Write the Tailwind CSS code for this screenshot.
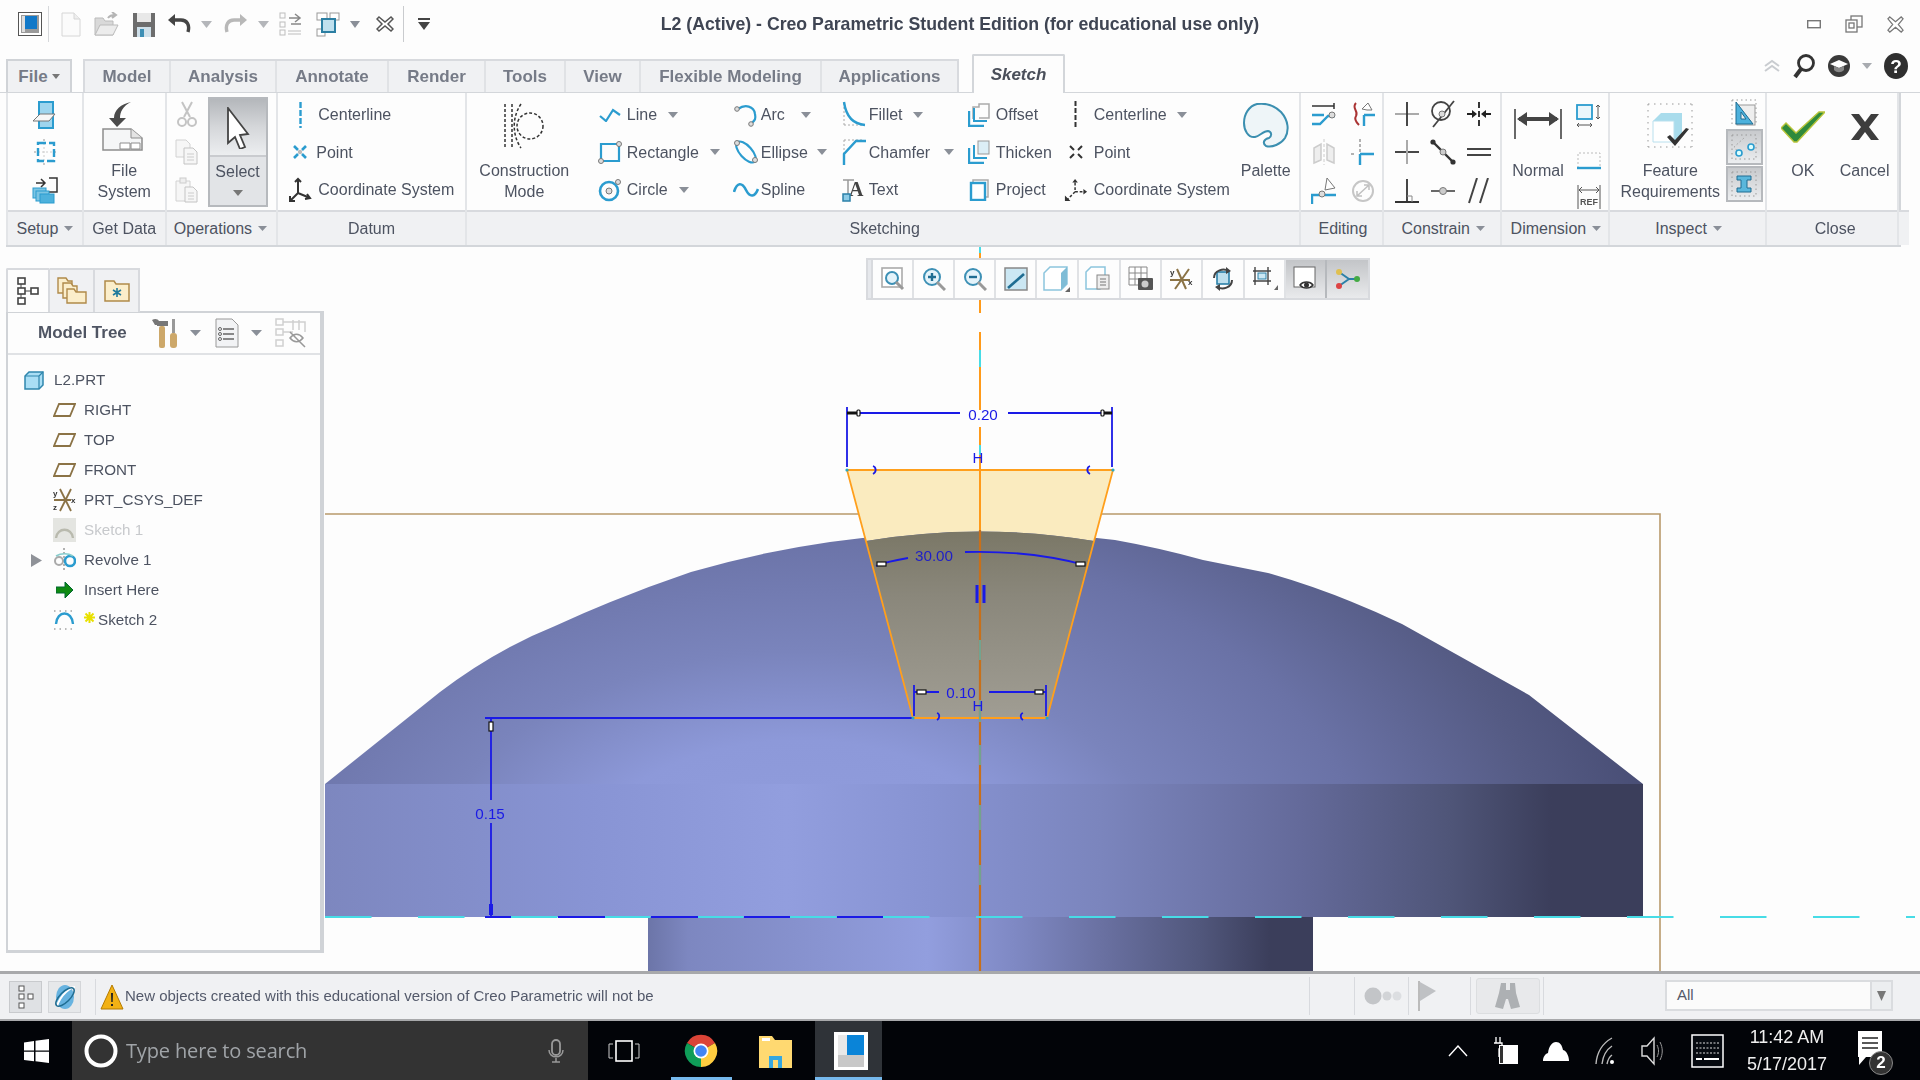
<!DOCTYPE html>
<html><head><meta charset="utf-8"><title>Creo</title>
<script src="https://cdn.jsdelivr.net/npm/@tailwindcss/browser@4"></script></head>
<body class="m-0 overflow-hidden bg-[#fdfdfd]">
<div class="w-[1920px] h-[1080px] flex flex-col font-['Liberation_Sans',Arial,sans-serif] text-[#4d5361] blur-[0.55px] overflow-hidden">

<!-- title bar -->
<header class="h-[48px] shrink-0 grid grid-cols-[1fr_auto_1fr] items-center">
  <div class="flex items-center pl-[18px] h-full">
    <svg class="w-[24px] h-[24px]" viewBox="0 0 24 24"><rect x=".5" y=".5" width="23" height="23" fill="#fff" stroke="#555"/><rect x="3" y="3" width="18" height="18" fill="#9a9a9a"/><rect x="7" y="4" width="12" height="13" fill="#1178c8"/><rect x="4" y="4" width="3" height="16" fill="#ddd"/></svg>
    <div class="w-px h-[36px] bg-[#d6d8db] ml-[6px]"></div>
    <svg class="w-[20px] h-[25px] ml-[12px]" viewBox="0 0 20 25"><path d="M1 1h12l6 6v17H1z" fill="#fbfbfb" stroke="#d6d6d6"/><path d="M13 1v6h6" fill="#eee" stroke="#d6d6d6"/></svg>
    <svg class="w-[25px] h-[25px] ml-[13px]" viewBox="0 0 25 25"><path d="M1 23V6h8l2 3h8v14z" fill="#d9d9d9" stroke="#bbb"/><path d="M1 23l5-10h18l-5 10z" fill="#ececec" stroke="#bbb"/><path d="M14 6c2-3 4-3 7-3M18 0l4 3-4 3" fill="none" stroke="#b5b5b5" stroke-width="2"/></svg>
    <svg class="w-[24px] h-[25px] ml-[13px]" viewBox="0 0 24 25"><path d="M1 1h22v24H1z" fill="#6d6d6d"/><rect x="5" y="1" width="14" height="9" fill="#e8e8e8"/><rect x="5" y="15" width="14" height="10" fill="#cfe0ea"/><rect x="8" y="17" width="4" height="8" fill="#3d8fb5"/></svg>
    <svg class="w-[24px] h-[20px] ml-[11px]" viewBox="0 0 24 20"><path d="M21 18c2-7-1-12-7-12H5" fill="none" stroke="#444" stroke-width="3.4"/><path d="M8 0L1 6l7 6z" fill="#444"/></svg>
    <svg class="w-[11px] h-[7px] ml-[10px]" viewBox="0 0 11 7"><path d="M0 0h11L5.500 7z" fill="#b4b6ba"/></svg>
    <svg class="w-[24px] h-[20px] ml-[12px]" viewBox="0 0 24 20"><path d="M3 18C1 11 4 6 10 6h9" fill="none" stroke="#b8b8b8" stroke-width="3.400"/><path d="M16 0l7 6-7 6z" fill="#b8b8b8"/></svg>
    <svg class="w-[11px] h-[7px] ml-[10px]" viewBox="0 0 11 7"><path d="M0 0h11L5.500 7z" fill="#b4b6ba"/></svg>
    <svg class="w-[24px] h-[24px] ml-[10px]" viewBox="0 0 24 24"><g fill="none" stroke="#bdbdbd"><rect x="1" y="1" width="5" height="5"/><rect x="1" y="10" width="5" height="5"/><rect x="1" y="18" width="5" height="5"/><path d="M9 19h13M9 22h13"/></g><path d="M10 6h10M16 2l5 4-5 4M22 12H12" fill="none" stroke="#888" stroke-width="1.500"/></svg>
    <svg class="w-[24px] h-[25px] ml-[13px]" viewBox="0 0 24 25"><g fill="#fff" stroke="#999"><rect x="1" y="1" width="10" height="7"/><rect x="14" y="1" width="9" height="7"/><rect x="1" y="17" width="8" height="7"/></g><rect x="6" y="7" width="13" height="13" fill="#bfe0ee" stroke="#2c7fa3" stroke-width="2"/></svg>
    <svg class="w-[10px] h-[7px] ml-[10px]" viewBox="0 0 10 7"><path d="M0 0h10L5 7z" fill="#8a8f98"/></svg>
    <svg class="w-[18px] h-[18px] ml-[16px]" viewBox="0 0 18 18"><path d="M3 2l6 5 6-5 2 2-5 5 5 5-2 2-6-5-6 5-2-2 5-5-5-5z" fill="#fff" stroke="#555" stroke-width="1.500"/></svg>
    <div class="w-px h-[36px] bg-[#c9cbce] ml-[9px]"></div>
    <svg class="w-[12px] h-[12px] ml-[14px]" viewBox="0 0 12 12"><path d="M0 0h12v2H0zM0 4h12L6 12z" fill="#444"/></svg>
  </div>
  <h1 class="m-0 text-[17.700px] font-bold text-[#3f4553] whitespace-nowrap">L2 (Active) - Creo Parametric Student Edition (for educational use only)</h1>
  <div class="flex items-center justify-end pr-[16px] h-full">
    <svg class="w-[14px] h-[9px]" viewBox="0 0 14 9"><rect x=".7" y=".7" width="12.600" height="7" fill="#fff" stroke="#777" stroke-width="1.400"/></svg>
    <svg class="w-[18px] h-[18px] ml-[24px]" viewBox="0 0 18 18"><g fill="none" stroke="#777" stroke-width="1.300"><rect x="6" y="1" width="11" height="11"/><rect x="1" y="5" width="11" height="12" fill="#fff"/><rect x="4" y="8" width="5" height="5"/></g></svg>
    <svg class="w-[17px] h-[17px] ml-[24px]" viewBox="0 0 18 18"><path d="M3 1l6 5 6-5 2 2-5 6 5 6-2 2-6-5-6 5-2-2 5-6-5-6z" fill="#fff" stroke="#777" stroke-width="1.300"/></svg>
  </div>
</header>

<!-- tabs -->
<nav class="h-[45px] shrink-0 flex items-end pl-[6px] pr-[12px] text-[17px] font-bold text-[#767b87] border-b border-[#d3d6da] mx-0">
  <div class="w-[66px] h-[33px] bg-[#f0f1f3] border-2 border-b-0 border-[#d0d3d7] flex items-center justify-center gap-[4px]">File<svg class="w-[8px] h-[5px]" viewBox="0 0 8 5"><path d="M0 0h8L4 5z" fill="#777"/></svg></div>
  <div class="ml-[11px] h-[33px] flex bg-[#f0f1f3] border-2 border-b-0 border-[#d8dade]">
    <div class="w-[86px] flex items-center justify-center border-r-2 border-[#e0e2e5]">Model</div>
    <div class="w-[106px] flex items-center justify-center border-r-2 border-[#e0e2e5]">Analysis</div>
    <div class="w-[112px] flex items-center justify-center border-r-2 border-[#e0e2e5]">Annotate</div>
    <div class="w-[97px] flex items-center justify-center border-r-2 border-[#e0e2e5]">Render</div>
    <div class="w-[80px] flex items-center justify-center border-r-2 border-[#e0e2e5]">Tools</div>
    <div class="w-[75px] flex items-center justify-center border-r-2 border-[#e0e2e5]">View</div>
    <div class="w-[181px] flex items-center justify-center border-r-2 border-[#e0e2e5]">Flexible Modeling</div>
    <div class="w-[135px] flex items-center justify-center">Applications</div>
  </div>
  <div class="ml-[13px] w-[93px] h-[39px] -mb-px bg-[#fdfdfd] border-2 border-b-0 border-[#d3d6da] rounded-t-[2px] flex items-center justify-center italic text-[#4a4f5a]">Sketch</div>
  <div class="ml-auto h-full flex items-center pb-[9px]">
    <svg class="w-[18px] h-[14px]" viewBox="0 0 18 14"><path d="M2 7l7-5 7 5M2 12l7-5 7 5" fill="none" stroke="#c9ccd0" stroke-width="2"/></svg>
    <svg class="w-[22px] h-[26px] ml-[12px]" viewBox="0 0 22 26"><circle cx="13" cy="10" r="7.500" fill="none" stroke="#333" stroke-width="2.800"/><path d="M8 16l-6 8" stroke="#333" stroke-width="4"/></svg>
    <svg class="w-[24px] h-[24px] ml-[12px]" viewBox="0 0 24 24"><circle cx="12" cy="12" r="11" fill="#3a3a3a"/><path d="M3 10l9-4 9 4-9 4z" fill="#fff"/><path d="M7 12v4c3 3 7 3 10 0v-4l-5 2z" fill="#888"/></svg>
    <svg class="w-[10px] h-[6px] ml-[11px]" viewBox="0 0 10 6"><path d="M0 0h10L5 6z" fill="#a8abb0"/></svg>
    <svg class="w-[24px] h-[26px] ml-[12px]" viewBox="0 0 24 26"><ellipse cx="12" cy="13" rx="12" ry="13" fill="#2f2f2f"/><text x="12" y="20" text-anchor="middle" font-size="19" font-weight="700" fill="#fff" font-family="Liberation Sans">?</text></svg>
  </div>
</nav>

<!-- ribbon -->
<section class="h-[154px] shrink-0 ml-[6px] w-[1895px] flex border-b-2 border-r-2 border-[#d3d6da] text-[16px] leading-[21px]">
  <!-- Setup -->
  <div class="w-[76px] flex flex-col border-l-2 border-[#e3e5e8]">
    <div class="h-[117px] pt-[3px] flex flex-col">
      <div class="h-[37.500px] flex items-center justify-center"><svg class="w-[26px] h-[28px]" viewBox="0 0 26 28"><path d="M7 1h14v26H7z" fill="#9ed5ee" stroke="#2b9ccf" stroke-width="2"/><path d="M1 20l7-7h15l-6 7z" fill="#f7f7f7" stroke="#777"/></svg></div>
      <div class="h-[37.500px] flex items-center justify-center"><svg class="w-[24px] h-[26px]" viewBox="0 0 24 26"><path d="M1 13h23" stroke="#999" stroke-dasharray="2 2"/><path d="M11 0v26" stroke="#999" stroke-dasharray="2 2"/><rect x="5" y="4" width="16" height="18" fill="#fff" fill-opacity=".5" stroke="#2b9ccf" stroke-width="2.400" stroke-dasharray="8 3"/></svg></div>
      <div class="h-[37.500px] flex items-center justify-center"><svg class="w-[26px] h-[28px]" viewBox="0 0 26 28"><path d="M17 2h8v14h-8M4 7h9M9 3l4 4-4 4" fill="none" stroke="#333" stroke-width="1.500"/><rect x="1" y="12" width="13" height="10" fill="#7cc5e3" stroke="#2b9ccf"/><rect x="4" y="15" width="13" height="10" fill="#7cc5e3" stroke="#2b9ccf"/><rect x="8" y="18" width="14" height="9" fill="#4db1dc" stroke="#2b9ccf"/></svg></div>
    </div>
    <div class="flex-1 bg-[#f0f1f3] border-t-2 border-[#d8dade] flex items-center justify-center gap-[6px]">Setup<svg class="w-[9px] h-[5px]" viewBox="0 0 9 5"><path d="M0 0h9L4.500 5z" fill="#8a8f98"/></svg></div>
  </div>
  <!-- Get Data -->
  <div class="w-[83px] flex flex-col border-l-2 border-[#e3e5e8]">
    <div class="h-[117px] flex flex-col items-center pt-[8px]">
      <svg class="w-[44px] h-[50px]" viewBox="0 0 44 50"><path d="M1 28h28l11 9v12H1z" fill="#f5f6f7" stroke="#8d8d8d" stroke-width="1.500"/><path d="M29 28v9h11" fill="#e4e4e4" stroke="#8d8d8d"/><path d="M18 42h10v6H18zM29 42h9v6h-9z" fill="#fff" stroke="#8d8d8d"/><path d="M29 1C21 5 18 11 18 17h6l-9 9-8-9h5C12 9 19 3 29 1z" fill="#4a4a4a"/></svg>
      <div class="mt-[9px] text-center">File<br>System</div>
    </div>
    <div class="flex-1 bg-[#f0f1f3] border-t-2 border-[#d8dade] flex items-center justify-center">Get Data</div>
  </div>
  <!-- Operations -->
  <div class="w-[112px] flex flex-col border-l-2 border-[#e3e5e8]">
    <div class="h-[117px] flex">
      <div class="w-[41px] pt-[3px] flex flex-col">
        <div class="h-[37.500px] flex items-center justify-center"><svg class="w-[20px] h-[28px]" viewBox="0 0 20 28"><path d="M5 1l8 15M15 1L7 16" stroke="#c4c4c4" stroke-width="2"/><circle cx="5" cy="21" r="4" fill="none" stroke="#c4c4c4" stroke-width="2"/><circle cx="15" cy="21" r="4" fill="none" stroke="#c4c4c4" stroke-width="2"/></svg></div>
        <div class="h-[37.500px] flex items-center justify-center"><svg class="w-[24px] h-[26px]" viewBox="0 0 24 26"><path d="M1 1h10l4 4v13H1z" fill="#f6f6f6" stroke="#d2d2d2"/><path d="M9 9h9l4 4v12H9z" fill="#f6f6f6" stroke="#c4c4c4"/><path d="M12 15h7M12 18h7M12 21h7" stroke="#ccc"/></svg></div>
        <div class="h-[37.500px] flex items-center justify-center"><svg class="w-[24px] h-[26px]" viewBox="0 0 24 26"><path d="M1 4h14v20H1z" fill="#f6f6f6" stroke="#d2d2d2"/><rect x="5" y="1" width="6" height="5" fill="#eee" stroke="#ccc"/><path d="M10 10h8l4 4v11H10z" fill="#f6f6f6" stroke="#c4c4c4"/><path d="M13 16h6M13 19h6M13 22h6" stroke="#ccc"/></svg></div>
      </div>
      <div class="w-[60px] h-[110px] mt-[4px] flex flex-col border-2 border-[#b6b9bd] bg-[#e2e4e7]">
        <div class="h-[58px] bg-gradient-to-b from-[#b4b7bb] via-[#d5d7da] to-[#eceef0] border-b-2 border-[#c9cbcf] flex justify-center pt-[8px]">
          <svg class="w-[24px] h-[42px]" viewBox="0 0 24 42"><path d="M2 1l20 26-8 1 5 12-5 2-5-12-7 6z" fill="#fff" stroke="#444" stroke-width="1.800"/></svg>
        </div>
        <div class="flex-1 flex flex-col items-center pt-[4px]">Select<svg class="w-[10px] h-[6px] mt-[8px]" viewBox="0 0 10 6"><path d="M0 0h10L5 6z" fill="#777"/></svg></div>
      </div>
    </div>
    <div class="flex-1 bg-[#f0f1f3] border-t-2 border-[#d8dade] flex items-center justify-center gap-[6px] pr-[2px]">Operations<svg class="w-[9px] h-[5px]" viewBox="0 0 9 5"><path d="M0 0h9L4.500 5z" fill="#8a8f98"/></svg></div>
  </div>
  <!-- Datum -->
  <div class="w-[189px] flex flex-col border-l-2 border-[#e3e5e8]">
    <div class="h-[117px] pt-[3px] flex flex-col pl-[10px]">
      <div class="h-[37.500px] flex items-center gap-[6px]"><div class="w-[24px] flex justify-center"><svg class="w-[3px] h-[26px]" viewBox="0 0 3 26"><path d="M1.500 0v26" stroke="#2b9ccf" stroke-width="2.400" stroke-dasharray="6 2"/></svg></div>Centerline</div>
      <div class="h-[37.500px] flex items-center gap-[6px]"><div class="w-[24px] flex justify-center"><svg class="w-[14px] h-[14px]" viewBox="0 0 14 14"><path d="M1 1l4 4M13 1L9 5M1 13l4-4M13 13L9 9" stroke="#2b9ccf" stroke-width="2.600"/><circle cx="7" cy="7" r="2.200" fill="#bbb"/></svg></div><span class="-ml-[2px]">Point</span></div>
      <div class="h-[37.500px] flex items-center gap-[6px]"><svg class="w-[24px] h-[26px]" viewBox="0 0 24 26"><path d="M10 2v14M10 16l12 5M10 16L2 24M7 5l3-3 3 3M19 17l3 4-5 1M2 19v5h5" fill="none" stroke="#333" stroke-width="2"/></svg>Coordinate System</div>
    </div>
    <div class="flex-1 bg-[#f0f1f3] border-t-2 border-[#d8dade] flex items-center justify-center">Datum</div>
  </div>
  <!-- Sketching -->
  <div class="w-[836px] flex flex-col border-l-2 border-[#e3e5e8]">
    <div class="h-[117px] flex">
      <div class="w-[127px] flex flex-col items-center pt-[10px] pr-[12px]">
        <svg class="w-[42px] h-[46px]" viewBox="0 0 42 46"><g fill="none" stroke="#333" stroke-width="1.500" stroke-dasharray="3 2"><path d="M2 1v44M9 1v44M18 1C9 14 9 32 18 45"/><circle cx="27" cy="23" r="13"/></g></svg>
        <div class="mt-[11px] text-center">Construction<br>Mode</div>
      </div>
      <div class="w-[137px] pt-[3px] flex flex-col">
        <div class="h-[37.500px] flex items-center"><div class="w-[33px] flex justify-center"><svg class="w-[22px] h-[14px]" viewBox="0 0 22 14"><path d="M1 8l6 5L14 2l7 5" fill="none" stroke="#2b9ccf" stroke-width="2.200"/></svg></div><span class="w-[41px]">Line</span><svg class="w-[10px] h-[6px]" viewBox="0 0 10 6"><path d="M0 0h10L5 6z" fill="#8a8f98"/></svg></div>
        <div class="h-[37.500px] flex items-center"><div class="w-[33px] flex justify-center"><svg class="w-[24px] h-[24px]" viewBox="0 0 24 24"><path d="M3 20V4h18" fill="none" stroke="#2b9ccf" stroke-width="2.200"/><path d="M21 4v17H3" fill="none" stroke="#2b9ccf" stroke-width="2.200"/><circle cx="21" cy="4" r="2.500" fill="#ddd" stroke="#777"/><circle cx="3" cy="21" r="2.500" fill="#ddd" stroke="#777"/></svg></div><span class="w-[83px]">Rectangle</span><svg class="w-[10px] h-[6px]" viewBox="0 0 10 6"><path d="M0 0h10L5 6z" fill="#8a8f98"/></svg></div>
        <div class="h-[37.500px] flex items-center"><div class="w-[33px] flex justify-center"><svg class="w-[24px] h-[24px]" viewBox="0 0 24 24"><circle cx="11" cy="13" r="9" fill="none" stroke="#2b9ccf" stroke-width="2.600"/><circle cx="11" cy="13" r="3" fill="#ddd" stroke="#777"/><circle cx="20" cy="4" r="2.500" fill="#ddd" stroke="#777"/></svg></div><span class="w-[52px]">Circle</span><svg class="w-[10px] h-[6px]" viewBox="0 0 10 6"><path d="M0 0h10L5 6z" fill="#8a8f98"/></svg></div>
      </div>
      <div class="w-[109px] pt-[3px] flex flex-col">
        <div class="h-[37.500px] flex items-center"><div class="w-[30px] flex justify-center"><svg class="w-[24px] h-[24px]" viewBox="0 0 24 24"><path d="M4 6c7-5 16-3 17 5 1 5 0 6-3 9" fill="none" stroke="#2b9ccf" stroke-width="2.200"/><circle cx="3" cy="6" r="2.300" fill="#ddd" stroke="#777"/><circle cx="17" cy="21" r="2.300" fill="#ddd" stroke="#777"/></svg></div><span class="w-[40px]">Arc</span><svg class="w-[10px] h-[6px]" viewBox="0 0 10 6"><path d="M0 0h10L5 6z" fill="#8a8f98"/></svg></div>
        <div class="h-[37.500px] flex items-center"><div class="w-[30px] flex justify-center"><svg class="w-[24px] h-[24px]" viewBox="0 0 24 24"><ellipse cx="12" cy="12" rx="6" ry="13" transform="rotate(-42 12 12)" fill="none" stroke="#2b9ccf" stroke-width="2.200"/><circle cx="3" cy="3" r="2.500" fill="#ddd" stroke="#777"/><circle cx="21" cy="20" r="2.500" fill="#ddd" stroke="#777"/></svg></div><span class="w-[56px]">Ellipse</span><svg class="w-[10px] h-[6px]" viewBox="0 0 10 6"><path d="M0 0h10L5 6z" fill="#8a8f98"/></svg></div>
        <div class="h-[37.500px] flex items-center"><div class="w-[30px] flex justify-center"><svg class="w-[26px] h-[16px]" viewBox="0 0 26 16"><path d="M1 10c3-10 8-10 12-2s9 7 12-1" fill="none" stroke="#2b9ccf" stroke-width="2.600"/></svg></div>Spline</div>
      </div>
      <div class="w-[127px] pt-[3px] flex flex-col">
        <div class="h-[37.500px] flex items-center"><div class="w-[29px] flex justify-center"><svg class="w-[24px] h-[28px]" viewBox="0 0 24 28"><path d="M2 24h18M2 2v22" stroke="#aaa" stroke-dasharray="2 2"/><path d="M2 1c2 14 8 22 21 23" fill="none" stroke="#2b9ccf" stroke-width="2.400"/></svg></div><span class="w-[44px]">Fillet</span><svg class="w-[10px] h-[6px]" viewBox="0 0 10 6"><path d="M0 0h10L5 6z" fill="#8a8f98"/></svg></div>
        <div class="h-[37.500px] flex items-center"><div class="w-[29px] flex justify-center"><svg class="w-[24px] h-[28px]" viewBox="0 0 24 28"><path d="M2 2h20M2 2v24" stroke="#aaa" stroke-dasharray="2 2"/><path d="M2 27V16L14 3h10" fill="none" stroke="#2b9ccf" stroke-width="2.400"/></svg></div><span class="w-[75px]">Chamfer</span><svg class="w-[10px] h-[6px]" viewBox="0 0 10 6"><path d="M0 0h10L5 6z" fill="#8a8f98"/></svg></div>
        <div class="h-[37.500px] flex items-center"><div class="w-[29px] flex justify-center"><svg class="w-[24px] h-[24px]" viewBox="0 0 24 24"><path d="M1 2h11M6 2v14" stroke="#999" stroke-width="1.500"/><text x="7" y="18" font-size="20" font-weight="700" font-family="Liberation Serif" fill="#444">A</text><rect x="1" y="16" width="7" height="7" fill="#8dcbe6" stroke="#2b80a8" stroke-width="1.500"/></svg></div>Text</div>
      </div>
      <div class="w-[97px] pt-[3px] flex flex-col">
        <div class="h-[37.500px] flex items-center"><div class="w-[24px] mr-[5px] flex justify-center"><svg class="w-[22px] h-[24px]" viewBox="0 0 22 24"><path d="M5 16V4h6V1h10v14H11" fill="none" stroke="#aaa" stroke-width="1.500"/><path d="M6 5v13h13" fill="none" stroke="#2b9ccf" stroke-width="2"/><path d="M1 8v15h15" fill="none" stroke="#2b9ccf" stroke-width="2.400"/></svg></div>Offset</div>
        <div class="h-[37.500px] flex items-center"><div class="w-[24px] mr-[5px] flex justify-center"><svg class="w-[22px] h-[24px]" viewBox="0 0 22 24"><rect x="10" y="1" width="11" height="13" fill="#dceef6" stroke="#999"/><path d="M6 5v13h13" fill="none" stroke="#2b9ccf" stroke-width="2"/><path d="M1 8v15h15" fill="none" stroke="#2b9ccf" stroke-width="2.400"/></svg></div>Thicken</div>
        <div class="h-[37.500px] flex items-center"><div class="w-[24px] mr-[5px] flex justify-center"><svg class="w-[20px] h-[22px]" viewBox="0 0 20 22"><path d="M4 4V1h15v17h-3" fill="none" stroke="#aaa" stroke-width="1.500"/><rect x="2" y="4" width="14" height="17" fill="#fff" stroke="#2b9ccf" stroke-width="2.400"/></svg></div>Project</div>
      </div>
      <div class="w-[167px] pt-[3px] flex flex-col">
        <div class="h-[37.500px] flex items-center"><div class="w-[24px] mr-[6px] flex justify-center"><svg class="w-[3px] h-[28px]" viewBox="0 0 3 28"><path d="M1.500 0v28" stroke="#333" stroke-width="2" stroke-dasharray="5 2"/></svg></div><span class="w-[83px]">Centerline</span><svg class="w-[10px] h-[6px]" viewBox="0 0 10 6"><path d="M0 0h10L5 6z" fill="#8a8f98"/></svg></div>
        <div class="h-[37.500px] flex items-center"><div class="w-[24px] mr-[6px] flex justify-center"><svg class="w-[14px] h-[14px]" viewBox="0 0 14 14"><path d="M1 1l4 4M13 1L9 5M1 13l4-4M13 13L9 9" stroke="#333" stroke-width="2"/></svg></div>Point</div>
        <div class="h-[37.500px] flex items-center"><div class="w-[24px] mr-[6px] flex justify-center"><svg class="w-[26px] h-[26px]" viewBox="0 0 26 26"><path d="M12 5v10M12 15l10 0M12 15L3 24" fill="none" stroke="#333" stroke-width="1.600" stroke-dasharray="3 2"/><path d="M9 5l3-4 3 4zM21 12l4 3-4 3zM1 19v6h6z" fill="#333"/></svg></div>Coordinate System</div>
      </div>
      <div class="flex-1 flex flex-col items-center pt-[10px] pl-[2px]">
        <svg class="w-[46px] h-[46px]" viewBox="0 0 46 46"><path d="M1 20C1 27 5 35 12 34C17 33 20 28 25 28C29 29 29 33 26 35C21 36 19 40 23 43C29 45 38 41 42 35C46 28 46 18 38 9C31 2 22 0 14 1C6 3 1 11 1 20z" fill="#eef5f8" stroke="#3b8fb0" stroke-width="2"/></svg>
        <div class="mt-[11px]">Palette</div>
      </div>
    </div>
    <div class="flex-1 bg-[#f0f1f3] border-t-2 border-[#d8dade] flex items-center justify-center pl-[4px]">Sketching</div>
  </div>
  <!-- Editing -->
  <div class="w-[84px] flex flex-col border-l-2 border-[#e3e5e8]">
    <div class="h-[117px] pt-[2px] grid grid-cols-[41px_37px] grid-rows-3 pl-[3px] items-center justify-items-center">
      <svg class="w-[26px] h-[24px]" viewBox="0 0 26 24"><path d="M1 4h22M23 1v6" stroke="#333" stroke-width="1.500"/><path d="M1 13h12M1 22h8l8-8h7" fill="none" stroke="#2b9ccf" stroke-width="2.400"/><circle cx="21" cy="13" r="3" fill="#ddd" stroke="#777"/></svg>
      <svg class="w-[26px] h-[26px]" viewBox="0 0 26 26"><path d="M6 2c-5 5 3 8 0 13-2 3 1 7 3 9" fill="none" stroke="#a33" stroke-width="2"/><path d="M14 14h11M14 14v11" fill="none" stroke="#2b9ccf" stroke-width="2.400"/><path d="M18 2l4 7h-5l-5-1z" fill="#fff" stroke="#777"/></svg>
      <svg class="w-[24px] h-[26px]" viewBox="0 0 24 26"><path d="M12 0v26" stroke="#ccc" stroke-dasharray="3 2"/><path d="M9 5v16l-7 3V9zM15 5v16l7 3V9z" fill="#eee" stroke="#ccc" stroke-width="1.500"/></svg>
      <svg class="w-[24px] h-[26px]" viewBox="0 0 24 26"><path d="M9 0v13M0 15h5" stroke="#999" stroke-width="1.500" stroke-dasharray="3 2"/><path d="M9 15h14M9 15v11" fill="none" stroke="#2b9ccf" stroke-width="2.400"/></svg>
      <svg class="w-[26px] h-[28px]" viewBox="0 0 26 28"><path d="M1 27V18h8M14 18h11" fill="none" stroke="#2b9ccf" stroke-width="2.400"/><circle cx="11" cy="17" r="3" fill="#ddd" stroke="#777"/><path d="M16 1l8 10-10 2z" fill="#fff" stroke="#777"/></svg>
      <svg class="w-[24px] h-[24px]" viewBox="0 0 24 24"><circle cx="12" cy="12" r="10" fill="none" stroke="#c6c6c6" stroke-width="2"/><path d="M6 17L18 6M13 6h5v5M6 12v5h5" fill="none" stroke="#c0c0c0" stroke-width="1.500"/></svg>
    </div>
    <div class="flex-1 bg-[#f0f1f3] border-t-2 border-[#d8dade] flex items-center justify-center pl-[3px]">Editing</div>
  </div>
  <!-- Constrain -->
  <div class="w-[118px] flex flex-col border-l-2 border-[#e3e5e8]">
    <div class="h-[117px] pt-[2px] grid grid-cols-[35px_37px_36px] grid-rows-3 pl-[5px] items-center justify-items-center">
      <svg class="w-[24px] h-[24px]" viewBox="0 0 24 24"><path d="M0 12h24" stroke="#aaa" stroke-width="2"/><path d="M12 0v24" stroke="#333" stroke-width="1.800"/></svg>
      <svg class="w-[26px] h-[28px]" viewBox="0 0 26 28"><circle cx="11" cy="11" r="9" fill="none" stroke="#444" stroke-width="1.800"/><path d="M24 1L3 27" stroke="#444" stroke-width="1.800"/><circle cx="12" cy="14" r="3" fill="#ddd" stroke="#777"/></svg>
      <svg class="w-[24px] h-[24px]" viewBox="0 0 24 24"><path d="M12 0v6M12 9v6M12 18v6" stroke="#222" stroke-width="1.800"/><path d="M0 12h6M18 12h6" stroke="#222" stroke-width="1.800"/><path d="M10 12L5 8v8zM14 12l5-4v8z" fill="#222"/></svg>
      <svg class="w-[24px] h-[24px]" viewBox="0 0 24 24"><path d="M0 12h24" stroke="#333" stroke-width="1.800"/><path d="M12 0v24" stroke="#aaa" stroke-width="2"/></svg>
      <svg class="w-[26px] h-[26px]" viewBox="0 0 26 26"><path d="M3 3l20 20" stroke="#333" stroke-width="2.400"/><circle cx="3" cy="3" r="2.600" fill="#333"/><circle cx="23" cy="23" r="2.600" fill="#333"/><circle cx="13" cy="13" r="3" fill="#ccc" stroke="#777"/></svg>
      <svg class="w-[24px] h-[10px]" viewBox="0 0 24 10"><path d="M0 2h24M0 8h24" stroke="#444" stroke-width="2"/></svg>
      <svg class="w-[24px] h-[24px]" viewBox="0 0 24 24"><path d="M12 0v23M0 23h24" stroke="#333" stroke-width="1.800"/><path d="M12 17h5v6" fill="none" stroke="#888"/></svg>
      <svg class="w-[24px] h-[10px]" viewBox="0 0 24 10"><path d="M0 5h24" stroke="#444" stroke-width="1.600"/><circle cx="12" cy="5" r="3.500" fill="#ccc" stroke="#777"/></svg>
      <svg class="w-[22px] h-[26px]" viewBox="0 0 22 26"><path d="M9 0L1 25M20 0l-8 25" stroke="#444" stroke-width="2"/></svg>
    </div>
    <div class="flex-1 bg-[#f0f1f3] border-t-2 border-[#d8dade] flex items-center justify-center gap-[6px] pl-[2px]">Constrain<svg class="w-[9px] h-[5px]" viewBox="0 0 9 5"><path d="M0 0h9L4.500 5z" fill="#8a8f98"/></svg></div>
  </div>
  <!-- Dimension -->
  <div class="w-[108px] flex flex-col border-l-2 border-[#e3e5e8]">
    <div class="h-[117px] flex">
      <div class="w-[72px] flex flex-col items-center pt-[16px]">
        <svg class="w-[48px] h-[30px]" viewBox="0 0 48 30"><path d="M1 0v30M47 0v30" stroke="#444" stroke-width="1.600"/><path d="M5 10h38" stroke="#444" stroke-width="4"/><path d="M3 10l10-7v14zM45 10l-10-7v14z" fill="#444"/></svg>
        <div class="mt-[21px]">Normal</div>
      </div>
      <div class="w-[30px] flex flex-col items-center">
        <div class="h-[35px] flex items-end"><svg class="w-[26px] h-[24px]" viewBox="0 0 26 24"><rect x="1" y="1" width="15" height="14" fill="#eaf6fb" stroke="#2b9ccf" stroke-width="1.800"/><path d="M22 1v14M20 3l2-2 2 2M20 13l2 2 2-2M1 21h15M3 19l-2 2 2 2M14 19l2 2-2 2" fill="none" stroke="#555"/></svg></div>
        <div class="h-[42px] flex items-end"><svg class="w-[24px] h-[18px]" viewBox="0 0 24 18"><path d="M1 16V1h22v15" fill="none" stroke="#bbb" stroke-dasharray="2 2"/><path d="M0 16h24" stroke="#2b9ccf" stroke-width="2.400"/></svg></div>
        <div class="mt-[15px] flex"><svg class="w-[24px] h-[24px]" viewBox="0 0 24 24"><path d="M1 0v24M23 0v24M2 5h20M5 2L2 5l3 3M19 2l3 3-3 3" fill="none" stroke="#555"/><text x="12" y="20" text-anchor="middle" font-size="9" font-weight="700" font-family="Liberation Sans" fill="#555">REF</text></svg></div>
      </div>
    </div>
    <div class="flex-1 bg-[#f0f1f3] border-t-2 border-[#d8dade] flex items-center justify-center gap-[6px] pl-[2px]">Dimension<svg class="w-[9px] h-[5px]" viewBox="0 0 9 5"><path d="M0 0h9L4.500 5z" fill="#8a8f98"/></svg></div>
  </div>
  <!-- Inspect -->
  <div class="w-[158px] flex flex-col border-l-2 border-[#e3e5e8]">
    <div class="h-[117px] flex">
      <div class="w-[116px] flex flex-col items-center pt-[10px] pl-[5px]">
        <svg class="w-[46px] h-[46px]" viewBox="0 0 46 46"><g fill="#888"><path d="M1 1h44M1 44h44M1 1v43M45 1v43" stroke="#999" stroke-dasharray="1.500 4.500" fill="none"/></g><path d="M6 18l8-8h21v21l-8 8H6z" fill="#a9dcec"/><path d="M6 18h21v21H6z" fill="#fff" stroke="#b9e0ee"/><path d="M20 34l8 9 14-17-3-1-11 12-5-5z" fill="#333"/></svg>
        <div class="mt-[11px] text-center whitespace-nowrap">Feature<br>Requirements</div>
      </div>
      <div class="flex flex-col items-center w-[37px] pt-[3px]">
        <div class="h-[33px] flex items-center"><svg class="w-[26px] h-[28px]" viewBox="0 0 26 28"><rect x="1" y="1" width="24" height="24" fill="none" stroke="#999" stroke-dasharray="1.500 3"/><rect x="6" y="6" width="18" height="20" fill="#eee" stroke="#999"/><path d="M5 3l17 22H5zM10 13l5 7h-5z" fill="#4db1dc" fill-rule="evenodd" stroke="#1f6d92"/></svg></div>
        <div class="w-[37px] h-[36px] border-2 border-[#b6b9bd] bg-gradient-to-b from-[#c8cacd] to-[#eceef0] flex items-center justify-center"><svg class="w-[26px] h-[26px]" viewBox="0 0 26 26"><rect x="1" y="1" width="24" height="24" fill="none" stroke="#999" stroke-dasharray="1.500 3"/><path d="M13 4L3 13l6 7" fill="none" stroke="#aaa" stroke-dasharray="2 2"/><circle cx="8" cy="19" r="3" fill="#dff" stroke="#2b9ccf" stroke-width="1.600"/><circle cx="20" cy="13" r="3" fill="#dff" stroke="#2b9ccf" stroke-width="1.600"/></svg></div>
        <div class="w-[37px] h-[36px] mt-[1px] border-2 border-[#b6b9bd] bg-gradient-to-b from-[#c8cacd] to-[#eceef0] flex items-center justify-center"><svg class="w-[26px] h-[26px]" viewBox="0 0 26 26"><rect x="1" y="1" width="24" height="24" fill="none" stroke="#999" stroke-dasharray="1.500 3"/><path d="M6 5h14v4h-4v8h4v4H6v-4h4V9H6z" fill="#5ab7dc" stroke="#1f6d92"/></svg></div>
      </div>
    </div>
    <div class="flex-1 bg-[#f0f1f3] border-t-2 border-[#d8dade] flex items-center justify-center gap-[6px] pl-[2px]">Inspect<svg class="w-[9px] h-[5px]" viewBox="0 0 9 5"><path d="M0 0h9L4.500 5z" fill="#8a8f98"/></svg></div>
  </div>
  <!-- Close -->
  <div class="w-[132px] flex flex-col border-l-2 border-[#e3e5e8]">
    <div class="h-[117px] flex">
      <div class="w-[65px] flex flex-col items-center pt-[18px] pl-[6px]">
        <svg class="w-[44px] h-[32px]" viewBox="0 0 44 32"><path d="M0 17l5-5 10 10L38 1h6L16 31h-3z" fill="#2f8a3c" stroke="#b8c43a" stroke-width="1.500"/></svg>
        <div class="mt-[17px]">OK</div>
      </div>
      <div class="flex-1 flex flex-col items-center pt-[21px]">
        <svg class="w-[30px] h-[26px]" viewBox="0 0 30 26"><path d="M1 0h8l6 8 6-8h8L19 13l10 13h-8l-6-8-6 8H1l10-13z" fill="#3d3d3d"/></svg>
        <div class="mt-[20px]">Cancel</div>
      </div>
    </div>
    <div class="flex-1 bg-[#f0f1f3] border-t-2 border-[#d8dade] flex items-center justify-center -mr-[12px] pr-[6px]">Close</div>
  </div>
  <div class="flex-1 flex flex-col border-l-2 border-[#e3e5e8]"><div class="h-[117px]"></div><div class="flex-1 bg-[#f0f1f3] border-t-2 border-[#d8dade]"></div></div>
</section>

<!-- main -->
<main class="relative h-[724px] shrink-0 flex">
  <aside class="w-[325px] shrink-0 pl-[6px] pt-[21px]">
    <div class="flex h-[44px]">
      <div class="w-[44px] bg-[#fdfdfd] border-2 border-b-0 border-[#d8dade] rounded-t-[2px] flex items-center justify-center"><svg class="w-[22px] h-[28px]" viewBox="0 0 22 28"><g fill="#fff" stroke="#444" stroke-width="1.600"><rect x="1" y="1" width="7" height="6"/><rect x="1" y="11" width="7" height="6"/><rect x="1" y="21" width="7" height="6"/><rect x="14" y="11" width="7" height="6"/></g><path d="M4 7v4M4 17v4M8 14h6" stroke="#444"/></svg></div>
      <div class="w-[45px] bg-[#f0f1f3] border-t-2 border-r-2 border-[#d8dade] flex items-center justify-center"><svg class="w-[30px] h-[28px]" viewBox="0 0 30 28"><g fill="#fbeecb" stroke="#b08a4a" stroke-width="1.400"><path d="M1 4V1h8l2 3h4v12H1z"/><path d="M6 10V6h8l2 3h4v12H6z"/><path d="M10 26V12h7l2 3h10v11z"/></g></svg></div>
      <div class="w-[45px] bg-[#f0f1f3] border-t-2 border-r-2 border-[#d8dade] flex items-center justify-center"><svg class="w-[26px] h-[22px]" viewBox="0 0 26 22"><path d="M1 21V1h9l2 3h13v17z" fill="#fbeecb" stroke="#b08a4a" stroke-width="1.500"/><path d="M13 8v9M9 10l8 5M17 10l-8 5" stroke="#1e7a9c" stroke-width="1.600"/></svg></div>
    </div>
    <div class="w-[318px] h-[642px] border-l-2 border-t-2 border-b-[3px] border-r-[4px] border-[#d0d3d7] -mt-px bg-[#fdfdfd] flex flex-col">
      <div class="h-[42px] shrink-0 border-b-2 border-[#e0e2e5] flex items-center pl-[30px]">
        <span class="text-[17px] font-bold text-[#4f5563] w-[114px] whitespace-nowrap">Model Tree</span>
        <svg class="w-[26px] h-[31px]" viewBox="0 0 26 31"><path d="M5 3h11v5H5z" fill="#777"/><path d="M0 2c3-2 6-1 7 1v4H3z" fill="#777"/><rect x="7" y="8" width="6" height="22" rx="2" fill="#cda86a"/><rect x="20" y="1" width="3" height="14" fill="#999"/><rect x="18" y="15" width="7" height="15" rx="3" fill="#cda86a"/></svg>
        <svg class="w-[11px] h-[6px] ml-[12px]" viewBox="0 0 11 6"><path d="M0 0h11L5.500 6z" fill="#8a8f98"/></svg>
        <svg class="w-[24px] h-[30px] ml-[14px]" viewBox="0 0 24 30"><path d="M1 1h16l6 6v22H1z" fill="#f2f3f5" stroke="#999"/><path d="M8 11h11M8 16h11M8 21h11" stroke="#666" stroke-width="1.400"/><circle cx="5" cy="11" r="1.500" fill="none" stroke="#666"/><circle cx="5" cy="16" r="1.500" fill="none" stroke="#666"/><circle cx="5" cy="21" r="1.500" fill="none" stroke="#666"/></svg>
        <svg class="w-[11px] h-[6px] ml-[12px]" viewBox="0 0 11 6"><path d="M0 0h11L5.500 6z" fill="#8a8f98"/></svg>
        <svg class="w-[32px] h-[30px] ml-[13px]" viewBox="0 0 32 30"><g fill="none" stroke="#d0d0d0" stroke-width="1.500"><rect x="1" y="1" width="7" height="6"/><rect x="1" y="11" width="7" height="6"/><rect x="1" y="22" width="7" height="6"/><path d="M8 4h22v10M8 14h10"/><path d="M18 2v10M24 2v10"/></g><path d="M15 20c4-5 9-5 13 0-4 5-9 5-13 0zM15 14l15 15" fill="none" stroke="#999" stroke-width="1.500"/></svg>
      </div>
      <ul class="m-0 p-0 list-none pt-[10px] text-[15.200px] text-[#4d5361]">
        <li class="h-[30px] flex items-center pl-[16px] gap-[10px]"><svg class="w-[20px] h-[19px]" viewBox="0 0 20 19"><path d="M1 18V5l4-4h14v13l-4 4z" fill="#a9def5" stroke="#2f86ad" stroke-width="1.500"/><path d="M1 5h14v13M15 5l4-4" fill="none" stroke="#2f86ad" stroke-width="1.200"/></svg>L2.PRT</li>
        <li class="h-[30px] flex items-center pl-[45px] gap-[8px]"><svg class="w-[23px] h-[14px]" viewBox="0 0 23 14"><path d="M6 1h16l-5 12H1z" fill="none" stroke="#8b7346" stroke-width="1.800"/></svg>RIGHT</li>
        <li class="h-[30px] flex items-center pl-[45px] gap-[8px]"><svg class="w-[23px] h-[14px]" viewBox="0 0 23 14"><path d="M6 1h16l-5 12H1z" fill="none" stroke="#8b7346" stroke-width="1.800"/></svg>TOP</li>
        <li class="h-[30px] flex items-center pl-[45px] gap-[8px]"><svg class="w-[23px] h-[14px]" viewBox="0 0 23 14"><path d="M6 1h16l-5 12H1z" fill="none" stroke="#8b7346" stroke-width="1.800"/></svg>FRONT</li>
        <li class="h-[30px] flex items-center pl-[45px] gap-[8px]"><svg class="w-[23px] h-[24px]" viewBox="0 0 23 24"><path d="M7 1l11 22M18 1L7 23M1 12h17" stroke="#8b7346" stroke-width="1.800"/><text x="0" y="8" font-size="8" font-weight="700" font-family="Liberation Sans" fill="#333">y</text><text x="0" y="22" font-size="8" font-weight="700" font-family="Liberation Sans" fill="#333">z</text><text x="18" y="15" font-size="8" font-weight="700" font-family="Liberation Sans" fill="#333">x</text></svg>PRT_CSYS_DEF</li>
        <li class="h-[30px] flex items-center pl-[45px] gap-[8px] text-[#c7c9cc]"><svg class="w-[23px] h-[24px]" viewBox="0 0 23 24"><rect width="23" height="24" fill="#e4e5e1"/><path d="M3 20C4 9 19 9 20 20" fill="none" stroke="#b9baae" stroke-width="2.400"/></svg>Sketch 1</li>
        <li class="h-[30px] flex items-center pl-[23px]"><svg class="w-[11px] h-[13px] mr-[11px]" viewBox="0 0 11 13"><path d="M0 0l11 6.500L0 13z" fill="#8f9298"/></svg><svg class="w-[23px] h-[24px]" viewBox="0 0 23 24"><path d="M11 0v24" stroke="#666" stroke-dasharray="2 2"/><circle cx="6" cy="13" r="4" fill="none" stroke="#aaa" stroke-width="2"/><circle cx="17" cy="13" r="5" fill="none" stroke="#2b9ccf" stroke-width="2.600"/><path d="M3 8c5-3 12-3 17 0" fill="none" stroke="#8cc" stroke-width="1.600"/></svg><span class="ml-[8px]">Revolve 1</span></li>
        <li class="h-[30px] flex items-center pl-[48px] gap-[10px]"><svg class="w-[18px] h-[16px]" viewBox="0 0 18 16"><path d="M0 5h9V0l8 8-8 8v-5H0z" fill="#0f8a12" stroke="#063"/></svg>Insert Here</li>
        <li class="h-[30px] flex items-center pl-[45px]"><svg class="w-[23px] h-[20px]" viewBox="0 0 23 20"><path d="M3 14c1-14 16-14 17 0" fill="none" stroke="#2b9ccf" stroke-width="2.400"/><path d="M1 1h21M1 19h21" stroke="#777" stroke-dasharray="1.500 4"/></svg><svg class="w-[11px] h-[11px] ml-[8px] -mt-[6px]" viewBox="0 0 11 11"><path d="M5.500 0v11M0 5.500h11M1.500 1.500l8 8M9.500 1.500l-8 8" stroke="#e8e000" stroke-width="2"/></svg><span class="ml-[3px]">Sketch 2</span></li>
      </ul>
    </div>
  </aside>

  <svg class="w-[1595px] h-[724px] shrink-0" viewBox="325 247 1595 724">
    <defs>
      <linearGradient id="fl" gradientUnits="userSpaceOnUse" x1="325" y1="0" x2="1644" y2="0"><stop offset="0" stop-color="#7d87bf"/><stop offset=".2" stop-color="#8894d4"/><stop offset=".35" stop-color="#929ede"/><stop offset=".46" stop-color="#8793d2"/><stop offset=".588" stop-color="#7b85bd"/><stop offset=".74" stop-color="#646a9a"/><stop offset=".853" stop-color="#4f5578"/><stop offset=".93" stop-color="#3b3e5b"/><stop offset="1" stop-color="#3b3e5b"/></linearGradient>
      <radialGradient id="dm" gradientUnits="userSpaceOnUse" cx="800" cy="880" r="900" gradientTransform="translate(0 880) scale(1 .62) translate(0 -880)"><stop offset="0" stop-color="#929ede"/><stop offset=".25" stop-color="#8d99d9"/><stop offset=".41" stop-color="#7a84bc"/><stop offset=".63" stop-color="#6a72a6"/><stop offset=".83" stop-color="#555b84"/><stop offset="1" stop-color="#444970"/></radialGradient>
      <linearGradient id="sh" gradientUnits="userSpaceOnUse" x1="648" y1="0" x2="1313" y2="0"><stop offset="0" stop-color="#6c75a8"/><stop offset=".06" stop-color="#7d87c0"/><stop offset=".42" stop-color="#929ede"/><stop offset=".55" stop-color="#7f89c4"/><stop offset=".68" stop-color="#6a71a2"/><stop offset=".83" stop-color="#51577c"/><stop offset=".935" stop-color="#3b3e5b"/><stop offset="1" stop-color="#3b3e5b"/></linearGradient>
      <linearGradient id="sc" gradientUnits="userSpaceOnUse" x1="0" y1="530" x2="0" y2="718"><stop offset="0" stop-color="#7a7766"/><stop offset=".35" stop-color="#8a877b"/><stop offset="1" stop-color="#a09d93"/></linearGradient>
    </defs>
    <path d="M325 514H1660V971" fill="none" stroke="#b8996b" stroke-width="1.600"/>
    <path d="M325 784H1643V917H325Z" fill="url(#fl)"/>
    <path d="M325 784L440 692Q495 650 555 626Q620 596 691 572Q760 552 830 542Q905 532 980 531Q1050 532 1115 540Q1160 548 1203 560L1268 573Q1335 592 1402 624L1529 695L1643 784Z" fill="url(#dm)"/>
    <rect x="648" y="917" width="665" height="54" fill="url(#sh)"/>
    <!-- sketch section -->
    <path d="M847 470H1113L1094 541Q980 522 866 541Z" fill="#faebbf"/>
    <path d="M866 541Q980 522 1094 541L1047 718H913Z" fill="url(#sc)"/>
    <path d="M847 470H1113L1047 718H913Z" fill="none" stroke="#ff9f1c" stroke-width="1.800"/>
    <!-- centerline -->
    <path d="M980 247V264M980 300V313M980 332V350M980 367V410M980 427V445M980 455V530" stroke="#ff9a1a" stroke-width="2"/>
    <path d="M980 247V253M980 350V367M980 445V455" stroke="#47dce6" stroke-width="2"/>
    <path d="M980 530V971" stroke="#c8701a" stroke-width="2.200"/>
    <path d="M980 640V660M980 700V722M980 745V765M980 805V830M980 865V885" stroke="#4fb9c2" stroke-width="1.400"/>
    <!-- dim lines -->
    <g fill="none" stroke="#1a1ae6" stroke-width="1.800">
      <path d="M847 407V467M1112 407V467M847 413H960M1008 413H1112"/>
      <path d="M876 566C885 562 896 560 908 558M965 552C1000 551 1040 553 1085 565"/>
      <path d="M914 685V716M1046 685V716M914 692H939M989 692H1046"/>
      <path d="M485 718H912M491 718V800M491 823V917"/>
      <path d="M873 466c3 1 4 6 0 8M1090 466c-3 1-4 6 0 8M937 713c3 1 3 5 0 7M1023 713c-3 1-3 5 0 7"/>
      <path d="M977 585V603M984 585V603" stroke-width="3"/>
    </g>
    <g stroke="#111" fill="#fff">
      <path d="M847 413H858" stroke-width="3"/><rect x="857" y="410" width="3" height="6" rx="1" stroke-width="1.200"/>
      <path d="M1102 413H1112" stroke-width="3"/><rect x="1101" y="410" width="3" height="6" rx="1" stroke-width="1.200"/>
      <rect x="877" y="562" width="9" height="4" stroke-width="1.200"/><rect x="1076" y="562" width="9" height="4" stroke-width="1.200"/>
      <rect x="917" y="690" width="9" height="4" stroke-width="1.200"/><rect x="1035" y="690" width="8" height="4" stroke-width="1.200"/>
      <rect x="489" y="722" width="4" height="9" stroke-width="1.200"/>
    </g>
    <rect x="489" y="904" width="4" height="11" fill="#1a1ae6"/>
    <g font-family="Liberation Sans" font-size="15.200" fill="#1a1ae6" text-anchor="middle">
      <text x="983" y="420">0.20</text>
      <text x="934" y="561" fill="#1e1ec8">30.00</text>
      <text x="961" y="698">0.10</text>
      <text x="490" y="819">0.15</text>
      <text x="978" y="463" font-size="15">H</text>
      <text x="978" y="711" font-size="15">H</text>
    </g>
    <circle cx="847" cy="470" r="1.600" fill="#28a8c0"/><circle cx="1113" cy="470" r="1.600" fill="#28a8c0"/><circle cx="913" cy="718" r="1.600" fill="#28a8c0"/><circle cx="1047" cy="718" r="1.600" fill="#28a8c0"/>
    <!-- axis -->
    <path d="M325 917H1915" stroke="#47dce6" stroke-width="2" stroke-dasharray="46.500 46.500"/>
    <path d="M485 917H511M558 917H605M651 917H698M744 917H790M837 917H883" stroke="#1a1ae6" stroke-width="2"/>
  </svg>

  <!-- graphics toolbar overlay -->
  <div class="absolute left-[866px] top-[11px] h-[42px] flex bg-[#fdfdfd] border-2 border-[#d8dade]">
    <div class="w-[5px] bg-[#e6e8ec] border-r-2 border-[#d8dade]"></div>
    <div class="w-[41px] flex items-center justify-center border-r-2 border-[#e0e2e5]"><svg class="w-[24px] h-[24px]" viewBox="0 0 24 24"><rect x="1" y="1" width="20" height="19" fill="#fff" stroke="#aaa" stroke-width="1.600"/><circle cx="11" cy="11" r="6" fill="#e4f3fa" stroke="#3d90b5" stroke-width="2"/><path d="M15 15l7 7" stroke="#999" stroke-width="3"/></svg></div>
    <div class="w-[41px] flex items-center justify-center border-r-2 border-[#e0e2e5]"><svg class="w-[24px] h-[24px]" viewBox="0 0 24 24"><circle cx="10" cy="10" r="8" fill="#e4f3fa" stroke="#3d90b5" stroke-width="2"/><path d="M6 10h8M10 6v8" stroke="#1f6d92" stroke-width="2.400"/><path d="M15 15l8 8" stroke="#999" stroke-width="3"/></svg></div>
    <div class="w-[41px] flex items-center justify-center border-r-2 border-[#e0e2e5]"><svg class="w-[24px] h-[24px]" viewBox="0 0 24 24"><circle cx="10" cy="10" r="8" fill="#e4f3fa" stroke="#3d90b5" stroke-width="2"/><path d="M6 10h8" stroke="#1f6d92" stroke-width="2.400"/><path d="M15 15l8 8" stroke="#999" stroke-width="3"/></svg></div>
    <div class="w-[41px] flex items-center justify-center border-r-2 border-[#e0e2e5]"><svg class="w-[24px] h-[24px]" viewBox="0 0 24 24"><rect x="1" y="1" width="22" height="22" fill="#cbe7f3" stroke="#888" stroke-width="1.500"/><path d="M4 21L20 7" stroke="#1f6d92" stroke-width="2.600"/></svg></div>
    <div class="w-[42px] flex items-center justify-center border-r-2 border-[#e0e2e5]"><svg class="w-[28px] h-[26px]" viewBox="0 0 28 26"><path d="M1 7l6-6h17v17l-6 6H1z" fill="#fff" stroke="#8cc5dd" stroke-width="1.500"/><path d="M18 7l6-6v17l-6 6z" fill="#7ebcd6"/><path d="M22 26l5-5v5z" fill="#666"/></svg></div>
    <div class="w-[42px] flex items-center justify-center border-r-2 border-[#e0e2e5]"><svg class="w-[28px] h-[26px]" viewBox="0 0 28 26"><path d="M1 6l5-5h14v17l-5 5H1z" fill="#fff" stroke="#8cc5dd" stroke-width="1.500"/><rect x="12" y="9" width="12" height="14" fill="#eee" stroke="#888"/><path d="M15 13h6M15 16h6M15 19h6" stroke="#777"/></svg></div>
    <div class="w-[41px] flex items-center justify-center border-r-2 border-[#e0e2e5]"><svg class="w-[26px] h-[26px]" viewBox="0 0 26 26"><path d="M1 1h18v18H1zM1 7h18M1 13h18M7 1v18M13 1v18" fill="#fff" stroke="#888"/><rect x="10" y="12" width="15" height="12" rx="1" fill="#555"/><circle cx="17" cy="18" r="3.500" fill="#ccc"/></svg></div>
    <div class="w-[41px] flex items-center justify-center border-r-2 border-[#e0e2e5]"><svg class="w-[26px] h-[26px]" viewBox="0 0 26 26"><path d="M8 3l9 20M20 3L6 23M1 14h20" stroke="#8b7346" stroke-width="2"/><text x="1" y="9" font-size="8" font-weight="700" font-family="Liberation Sans" fill="#333">y</text><text x="19" y="19" font-size="8" font-weight="700" font-family="Liberation Sans" fill="#333">x</text></svg></div>
    <div class="w-[42px] flex items-center justify-center border-r-2 border-[#e0e2e5]"><svg class="w-[26px] h-[26px]" viewBox="0 0 26 26"><rect x="7" y="6" width="12" height="12" fill="#bfe0ee" stroke="#2b80a8" stroke-width="1.600"/><path d="M4 12c0-8 10-10 14-7M22 14c0 8-10 10-14 7" fill="none" stroke="#444" stroke-width="2"/><path d="M16 1l5 4-5 3zM10 25l-5-4 5-3z" fill="#444"/></svg></div>
    <div class="w-[41px] flex items-center justify-center border-r-2 border-[#e0e2e5]"><svg class="w-[26px] h-[26px]" viewBox="0 0 26 26"><path d="M3 1v18M16 1v18M1 5h18M1 15h18" stroke="#444" stroke-width="1.400"/><rect x="6" y="7" width="8" height="6" fill="#cbe7f3" stroke="#2b80a8"/><path d="M22 24l4-5v5z" fill="#666"/></svg></div>
    <div class="w-[41px] flex items-center justify-center border-r-2 border-[#b6b9bd] bg-gradient-to-b from-[#c3c5c8] to-[#e9eaec]"><svg class="w-[26px] h-[26px]" viewBox="0 0 26 26"><rect x="1" y="1" width="21" height="20" fill="#fff" stroke="#666"/><path d="M7 19c3-4 10-4 13 0-3 4-10 4-13 0z" fill="#fff" stroke="#333" stroke-width="1.400"/><circle cx="13.500" cy="19" r="2.500" fill="#333"/></svg></div>
    <div class="w-[41px] flex items-center justify-center bg-gradient-to-b from-[#c3c5c8] to-[#e9eaec]"><svg class="w-[26px] h-[24px]" viewBox="0 0 26 24"><path d="M4 5l10 7M4 19l10-7M14 12h8" stroke="#2b80a8" stroke-width="2"/><circle cx="4" cy="5" r="3" fill="#e0c050"/><circle cx="4" cy="19" r="3" fill="#d44"/><circle cx="22" cy="12" r="3" fill="#4a4"/></svg></div>
  </div>
</main>

<!-- status bar -->
<footer class="h-[50px] shrink-0 bg-[#f0f1f3] border-t-[3px] border-b-[2px] border-t-[#a8a9ab] border-b-[#a8a9ab] flex items-center text-[15px] text-[#53596a] relative">
  <div class="w-[33px] h-[32px] ml-[9px] bg-[#dfe1e4] border border-[#c8cacd] flex items-center justify-center"><svg class="w-[16px] h-[24px]" viewBox="0 0 16 24"><g fill="#fff" stroke="#555"><rect x="1" y="1" width="5" height="5"/><rect x="1" y="9" width="5" height="5"/><rect x="1" y="18" width="5" height="5"/><rect x="10" y="9" width="5" height="5"/></g></svg></div>
  <div class="w-[33px] h-[32px] ml-[6px] bg-[#e6e8ea] border border-[#d4d6d9] flex items-center justify-center"><svg class="w-[24px] h-[26px]" viewBox="0 0 24 26"><ellipse cx="12" cy="13" rx="9" ry="12" fill="#67b3e0"/><path d="M4 22C8 10 18 3 22 3" fill="none" stroke="#fff" stroke-width="2"/><ellipse cx="12" cy="13" rx="12" ry="5" transform="rotate(-45 12 13)" fill="none" stroke="#1f6d92" stroke-width="1.500"/></svg></div>
  <div class="w-px h-[36px] bg-[#d8dade] ml-[14px]"></div>
  <svg class="w-[24px] h-[26px] ml-[4px]" viewBox="0 0 24 26"><path d="M12 1L1 25h22z" fill="#f2b114" stroke="#b57b00"/><path d="M11 9h2l-.300 9h-1.400zM11 20h2v2h-2z" fill="#222"/></svg>
  <span class="whitespace-nowrap ml-[1px]">New objects created with this educational version of Creo Parametric will not be</span>
  <div class="absolute left-[1309px] top-[3px] h-[38px] flex items-center">
    <div class="w-px h-full bg-[#d8dade]"></div>
    <div class="w-px h-full bg-[#d8dade] ml-[44px]"></div>
    <svg class="w-[40px] h-[18px] ml-[9px]" viewBox="0 0 40 18"><circle cx="9" cy="9" r="8.500" fill="#c3c5c8"/><circle cx="23" cy="9" r="4.500" fill="#d2d4d7"/><circle cx="33" cy="9" r="4.500" fill="#dcdee1"/></svg>
  </div>
  <div class="absolute left-[1408px] top-[3px] h-[38px] flex items-center">
    <div class="w-px h-full bg-[#d8dade]"></div>
    <svg class="w-[20px] h-[30px] ml-[8px]" viewBox="0 0 20 30"><path d="M2 0v30" stroke="#bbb" stroke-width="2"/><path d="M3 1l16 9-16 10z" fill="#bfc1c4"/></svg>
    <div class="w-px h-full bg-[#d8dade] ml-[33px]"></div>
    <div class="w-[64px] h-[36px] ml-[5px] bg-[#e8e9eb] border border-[#dcdee0] rounded-[3px] flex items-center justify-center"><svg class="w-[26px] h-[28px]" viewBox="0 0 26 28"><path d="M6 1h5v7h4V1h5l1 10 4 14-9 2-3-10h-2L8 27l-8-2 4-14z" fill="#adb0b3"/></svg></div>
    <div class="w-px h-full bg-[#d8dade] ml-[3px]"></div>
  </div>
  <div class="absolute left-[1665px] top-[6px] w-[228px] h-[31px] bg-[#fbfbfb] border-2 border-[#dadcdf] flex items-center">
    <span class="flex-1 pl-[10px]">All</span>
    <div class="w-[21px] h-full bg-[#eceef0] border-l-2 border-[#dadcdf] flex items-center justify-center"><svg class="w-[9px] h-[10px]" viewBox="0 0 9 10"><path d="M0 0h9L4.500 10z" fill="#777"/></svg></div>
  </div>
</footer>

<!-- taskbar -->
<div class="flex-1 bg-[#020408] flex items-center text-white">
  <div class="w-[72px] h-full flex items-center justify-center"><svg class="w-[25px] h-[24px]" viewBox="0 0 25 24"><path d="M0 3.500l10-1.500v9.500H0zM11.500 1.800L25 0v11.500H11.500zM0 12.800h10v9.500L0 21zM11.500 12.800H25V24l-13.500-1.800z" fill="#fff"/></svg></div>
  <div class="w-[516px] h-full bg-[#333333] flex items-center">
    <svg class="w-[34px] h-[34px] ml-[12px]" viewBox="0 0 34 34"><circle cx="17" cy="17" r="14.500" fill="none" stroke="#fff" stroke-width="4"/></svg>
    <span class="ml-[8px] text-[#a0a4a8] text-[20px] font-['Open_Sans',sans-serif] tracking-[-0.15px] w-[421px]">Type here to search</span>
    <svg class="w-[18px] h-[24px]" viewBox="0 0 18 24"><rect x="5" y="1" width="8" height="15" rx="4" fill="none" stroke="#999" stroke-width="1.800"/><path d="M2 11c0 9 14 9 14 0M9 19v4M5 23h8" fill="none" stroke="#999" stroke-width="1.500"/></svg>
  </div>
  <div class="w-[72px] h-full flex items-center justify-center"><svg class="w-[32px] h-[22px]" viewBox="0 0 32 22"><rect x="8" y="1" width="16" height="20" fill="none" stroke="#fff" stroke-width="1.600"/><path d="M5 4H1v14h4M27 4h4v14h-4" fill="none" stroke="#ccc"/></svg></div>
  <div class="w-[82px] h-full relative flex items-center justify-center"><svg class="w-[34px] h-[34px]" viewBox="0 0 34 34"><path d="M17 17L3 9A16 16 0 0 1 31 9z" fill="#db4437"/><path d="M17 17L3 9A16 16 0 0 0 17 33z" fill="#0f9d58"/><path d="M17 17L31 9A16 16 0 0 1 17 33z" fill="#ffcd40"/><circle cx="17" cy="17" r="7.500" fill="#fff"/><circle cx="17" cy="17" r="5.800" fill="#4285f4"/></svg><div class="absolute bottom-0 left-[11px] w-[61px] h-[3px] bg-[#76b9ed]"></div></div>
  <div class="w-[66px] mr-[7px] h-full flex items-center justify-center"><svg class="w-[33px] h-[34px]" viewBox="0 0 33 34"><path d="M0 2h13l3 4h17v28H0z" fill="#ffd971"/><rect x="3" y="4" width="8" height="3" fill="#fff"/><path d="M10 34V22h13v12h-4v-8h-5v8z" fill="#35a7e0"/></svg></div>
  <div class="w-[67px] h-full bg-[#2f3338] relative flex items-center justify-center pl-[4px]"><svg class="w-[34px] h-[38px]" viewBox="0 0 34 38"><rect width="34" height="38" fill="#fff"/><rect x="4" y="3" width="26" height="32" fill="#c8c8c8"/><rect x="13" y="3" width="17" height="20" fill="#0a84d8"/><rect x="4" y="3" width="9" height="20" fill="#e8e8e8"/></svg><div class="absolute bottom-0 left-0 right-0 h-[3px] bg-[#76b9ed]"></div></div>
  <div class="flex-1"></div>
  <svg class="w-[20px] h-[12px]" viewBox="0 0 20 12"><path d="M1 11l9-10 9 10" fill="none" stroke="#fff" stroke-width="1.400"/></svg>
  <svg class="w-[26px] h-[28px] ml-[25px]" viewBox="0 0 26 28"><path d="M3 0v6M7 0v6M1 6h8v6H6v8" fill="none" stroke="#fff" stroke-width="1.300"/><rect x="6" y="8" width="19" height="19" fill="#fff"/><rect x="7" y="9" width="3" height="17" fill="#333"/></svg>
  <svg class="w-[28px] h-[24px] ml-[23px]" viewBox="0 0 28 24"><path d="M1 22c0-4 2-7 5-8 1-7 4-11 8-11 4 0 6 3 7 8 4 1 6 7 6 11z" fill="#fff"/></svg>
  <svg class="w-[20px] h-[28px] ml-[25px]" viewBox="0 0 20 28"><path d="M1 27C2 14 8 6 17 1M7 27C8 18 11 13 17 9M12 27c1-5 2-7 5-9" fill="none" stroke="#bbb" stroke-width="1.400"/><circle cx="17" cy="25" r="2" fill="#fff"/></svg>
  <svg class="w-[24px] h-[30px] ml-[26px]" viewBox="0 0 24 30"><path d="M1 10h5l7-8v26l-7-8H1z" fill="none" stroke="#ddd" stroke-width="1.400"/><path d="M16 9c2 4 2 8 0 12M19 6c3 6 3 12 0 18" fill="none" stroke="#999"/></svg>
  <svg class="w-[33px] h-[34px] ml-[26px]" viewBox="0 0 33 34"><rect x="1" y="1" width="31" height="32" fill="#060a10" stroke="#fff" stroke-width="1.500"/><path d="M5 9h23M5 14h23M5 19h23" stroke="#ddd" stroke-dasharray="2 1.500"/><path d="M5 25h6M13 25h15" stroke="#fff" stroke-width="1.800"/></svg>
  <div class="w-[100px] ml-[13px] text-center text-[18px] leading-[27px] text-[#f0f0f0] font-['Liberation_Sans',sans-serif]">11:42 AM<br>5/17/2017</div>
  <div class="w-[28px] h-[48px] ml-[18px] mr-[37px] relative"><svg class="absolute left-[3px] top-[4px] w-[24px] h-[36px]" viewBox="0 0 24 36"><path d="M0 0h24v26H8L1 34V26H0z" fill="#fff"/><path d="M4 7h16M4 12h16M4 17h16" stroke="#222" stroke-width="1.600"/></svg><div class="absolute left-[14px] top-[24px] w-[24px] h-[24px] rounded-full bg-[#333] border border-[#888] text-white text-[17px] font-bold flex items-center justify-center">2</div></div>
</div>
</div>
</body></html>
